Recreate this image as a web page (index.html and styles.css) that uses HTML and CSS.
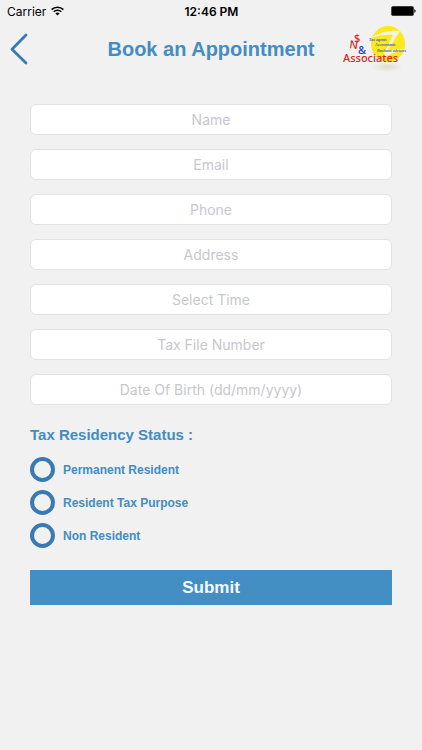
FILE: index.html
```html
<!DOCTYPE html>
<html lang="en">
<head>
  <meta charset="UTF-8" />
  <title>Book an Appointment</title>
  <meta name="viewport" content="width=device-width, initial-scale=1.0" />
  <link rel="stylesheet" href="styles.css">
</head>
<body>
  <div class="status-bar">
    <div class="carrier">
      <span>Carrier</span>
      <svg width="13" height="10" viewBox="0 0 13 10" fill="none" stroke="#000" stroke-width="1.6" aria-hidden="true">
        <path d="M0.6 3.6a8.4 8.4 0 0 1 11.8 0" />
        <path d="M2.7 5.8a5.4 5.4 0 0 1 7.6 0" />
        <path d="M6.5 9.6L4.4 7.5a3 3 0 0 1 4.2 0z" fill="#000" stroke="none" />
      </svg>
    </div>
    <div class="clock">12:46 PM</div>
    <div class="battery">
      <svg width="25" height="10" viewBox="0 0 25 10" aria-hidden="true">
        <rect x="0.3" y="0.3" width="22.4" height="9.4" rx="1.5" />
        <path d="M23.3 3.3c1.8 0.4 1.8 3 0 3.4z" />
      </svg>
    </div>
  </div>

  <header class="header">
    <a href="#" class="back" aria-label="Back">
      <svg width="18" height="32" viewBox="0 0 18 32" fill="none" stroke="#377ab5" stroke-width="2.8" stroke-linecap="round" stroke-linejoin="round">
        <path d="M16 2L2 16.2L16 30" />
      </svg>
    </a>
    <h1>Book an Appointment</h1>
    <svg class="logo" width="66" height="50" viewBox="0 0 66 50" role="img" aria-label="NS &amp; Associates">
      <defs>
        <radialGradient id="shade">
          <stop offset="0" stop-color="#e0deC4" />
          <stop offset="1" stop-color="#f1f1f1" />
        </radialGradient>
      </defs>
      <ellipse cx="45" cy="43" rx="16" ry="5" fill="url(#shade)" />
      <ellipse cx="46" cy="20" rx="17" ry="18" fill="#fbe81e" />
      <path d="M29 14C38 8 49 6 58 7L44 29C50 25 58 24 63 26C54 27 46 31 39 35L51 11C44 10 36 12 29 14z" fill="#f6f4dc" />
      <g class="logo-tags">
        <text x="27" y="17">Tax agents</text>
        <text x="33" y="22">Accountants</text>
        <text x="35" y="28">Business advisors</text>
      </g>
      <g class="logo-name">
        <text x="7" y="24" transform="rotate(8 7 24)">N</text>
        <text x="12" y="18">$</text>
        <text x="1" y="38">Associates</text>
      </g>
      <text class="logo-amp" x="16" y="30">&amp;</text>
    </svg>
  </header>

  <form class="booking">
    <div class="fields">
      <input type="text" placeholder="Name" aria-label="Name" />
      <input type="email" placeholder="Email" aria-label="Email" />
      <input type="tel" placeholder="Phone" aria-label="Phone" />
      <input type="text" placeholder="Address" aria-label="Address" />
      <input type="text" placeholder="Select Time" aria-label="Select Time" />
      <input type="text" placeholder="Tax File Number" aria-label="Tax File Number" />
      <input type="text" placeholder="Date Of Birth (dd/mm/yyyy)" aria-label="Date Of Birth" />
    </div>

    <fieldset class="residency">
      <legend>Tax Residency Status :</legend>
      <label><input type="radio" name="residency" value="permanent" /> Permanent Resident</label>
      <label><input type="radio" name="residency" value="purpose" /> Resident Tax Purpose</label>
      <label><input type="radio" name="residency" value="non" /> Non Resident</label>
    </fieldset>

    <button type="submit">Submit</button>
  </form>
</body>
</html>
```

FILE: styles.css
```css
* {
  box-sizing: border-box;
}

body {
  margin: 0;
  min-height: 100vh;
  background: #f1f1f1;
  font-family: "Liberation Sans", Arial, sans-serif;
  color: #438dc1;
}

.status-bar {
  display: grid;
  grid-template-columns: 1fr auto 1fr;
  align-items: center;
  height: 22px;
  padding: 0 6px 0 7px;
  font-family: Inter, sans-serif;
  font-size: 12px;
  color: #000;
}

.carrier {
  display: flex;
  align-items: center;
  gap: 5px;
}

.clock {
  font-weight: 600;
}

.battery {
  display: flex;
  justify-content: flex-end;
}

.header {
  display: grid;
  grid-template-columns: 70px 1fr 66px;
  align-items: center;
  height: 54px;
  padding: 0 14px 0 10px;
}

.back {
  display: flex;
}

h1 {
  margin: 0;
  font-size: 20px;
  line-height: 24px;
  text-align: center;
}

.logo-name {
  font-family: "Noto Sans", sans-serif;
  font-size: 11px;
  font-weight: 500;
  fill: #d92323;
}

.logo-amp {
  font-family: "Noto Sans", sans-serif;
  font-size: 11px;
  font-weight: 500;
  fill: #2742cf;
}

.logo-tags {
  font-family: "Liberation Serif", serif;
  font-size: 4px;
  font-style: italic;
  font-weight: bold;
  fill: #4463b4;
}

.booking {
  padding: 28px 30px 20px;
}

.fields {
  display: flex;
  flex-direction: column;
  gap: 14px;
}

.fields input {
  width: 100%;
  height: 31px;
  padding: 0 10px;
  border: 1px solid #e2e2e3;
  border-radius: 6px;
  background: #fff;
  font-family: Inter, sans-serif;
  font-size: 14px;
  text-align: center;
  color: #333;
}

.fields input::placeholder {
  color: #c7c7cc;
  opacity: 1;
}

.residency {
  display: flex;
  flex-direction: column;
  gap: 8px;
  margin: 20px 0 0;
  padding: 0;
  border: none;
}

.residency legend {
  margin-bottom: 12px;
  padding: 0;
  font-size: 15px;
  line-height: 20px;
  font-weight: bold;
}

.residency label {
  display: flex;
  align-items: center;
  gap: 8px;
  font-size: 12px;
  font-weight: bold;
}

.residency input {
  appearance: none;
  width: 25px;
  height: 25px;
  margin: 0;
  border: 4px solid #3a7ab3;
  border-radius: 50%;
}

.residency input:checked {
  background: #438dc1;
  box-shadow: inset 0 0 0 3px #f1f1f1;
}

button {
  width: 100%;
  height: 35px;
  margin-top: 22px;
  border: none;
  background: #438ec3;
  font-family: inherit;
  font-size: 17px;
  font-weight: bold;
  color: #f4fbff;
  cursor: pointer;
}
```
